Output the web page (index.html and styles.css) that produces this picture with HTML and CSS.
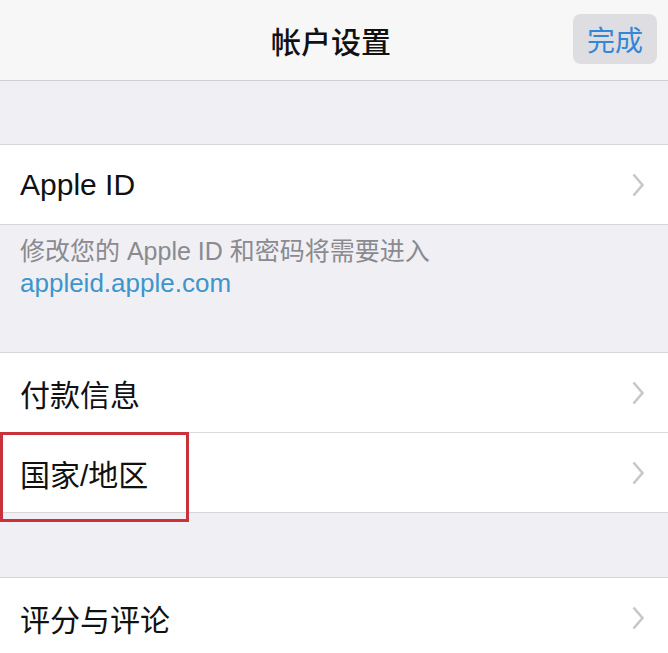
FILE: index.html
```html
<!DOCTYPE html>
<html lang="zh-CN">
<head>
    <meta charset="UTF-8">
    <meta name="viewport" content="width=device-width, initial-scale=1.0">
    <title>帐户设置</title>
    <link rel="stylesheet" href="styles.css">
</head>
<body>
    <header class="nav">
        <span></span>
        <h1 class="nav-title">帐户设置</h1>
        <button class="done-button">完成</button>
    </header>

    <div class="spacer"></div>
    <ul class="group">
        <li class="row">
            <span class="row-label">Apple ID</span>
            <svg class="chevron" viewBox="0 0 12 24"><path d="M1.5 1.5 L10.5 12 L1.5 22.5"/></svg>
        </li>
    </ul>
    <div class="footer-note">
        <p>修改您的 Apple ID 和密码将需要进入</p>
        <a class="note-link" href="#">appleid.apple.com</a>
    </div>

    <ul class="group">
        <li class="row">
            <span class="row-label">付款信息</span>
            <svg class="chevron" viewBox="0 0 12 24"><path d="M1.5 1.5 L10.5 12 L1.5 22.5"/></svg>
        </li>
        <li class="row row-marked">
            <span class="row-label">国家/地区</span>
            <svg class="chevron" viewBox="0 0 12 24"><path d="M1.5 1.5 L10.5 12 L1.5 22.5"/></svg>
            <span class="mark-box"></span>
        </li>
    </ul>

    <div class="spacer spacer-low"></div>
    <ul class="group">
        <li class="row">
            <span class="row-label">评分与评论</span>
            <svg class="chevron" viewBox="0 0 12 24"><path d="M1.5 1.5 L10.5 12 L1.5 22.5"/></svg>
        </li>
    </ul>
</body>
</html>
```

FILE: styles.css
```css
body {
    font-family: "Liberation Sans", "Noto Sans CJK SC", sans-serif;
    background-color: #efeff4;
    margin: 0;
    padding: 0;
    color: #111;
    overflow: hidden;
}
.nav {
    display: grid;
    grid-template-columns: 1fr auto 1fr;
    align-items: center;
    height: 80px;
    background-color: #f7f7f8;
    border-bottom: 1px solid #cfcfd3;
    padding: 0 11px;
}
.nav-title {
    margin: 0 6px 0 0;
    font-size: 30px;
    font-weight: 500;
    color: #111;
}
.done-button {
    justify-self: end;
    width: 84px;
    height: 50px;
    border: none;
    border-radius: 8px;
    background-color: #dedee2;
    color: #3387d6;
    font-family: inherit;
    font-size: 28px;
    padding: 0;
    margin-top: -2px;
}
.spacer {
    height: 63px;
}
.spacer-low {
    height: 64px;
}
.group {
    list-style: none;
    margin: 0;
    padding: 0;
    background: #fff;
    border-top: 1px solid #d6d6da;
    border-bottom: 1px solid #d6d6da;
}
.row {
    display: flex;
    align-items: center;
    height: 79px;
    padding: 0 24px 0 20px;
    font-size: 30px;
}
.row + .row {
    border-top: 1px solid #dcdce0;
}
.row-label {
    flex: 1;
}
.chevron {
    width: 12px;
    height: 24px;
    fill: none;
    stroke: #c7c7cc;
    stroke-width: 2.6;
}
.footer-note {
    height: 127px;
    padding: 10px 20px 0;
    font-size: 25px;
    line-height: 32px;
    color: #8a8a8f;
    box-sizing: border-box;
}
.footer-note p {
    margin: 0;
}
.note-link {
    color: #3d95cc;
    text-decoration: none;
    font-size: 26px;
}
.row-marked {
    position: relative;
}
.mark-box {
    position: absolute;
    left: 0;
    top: -1px;
    width: 189px;
    height: 90px;
    border: 3px solid #c9313b;
    box-sizing: border-box;
}
```
